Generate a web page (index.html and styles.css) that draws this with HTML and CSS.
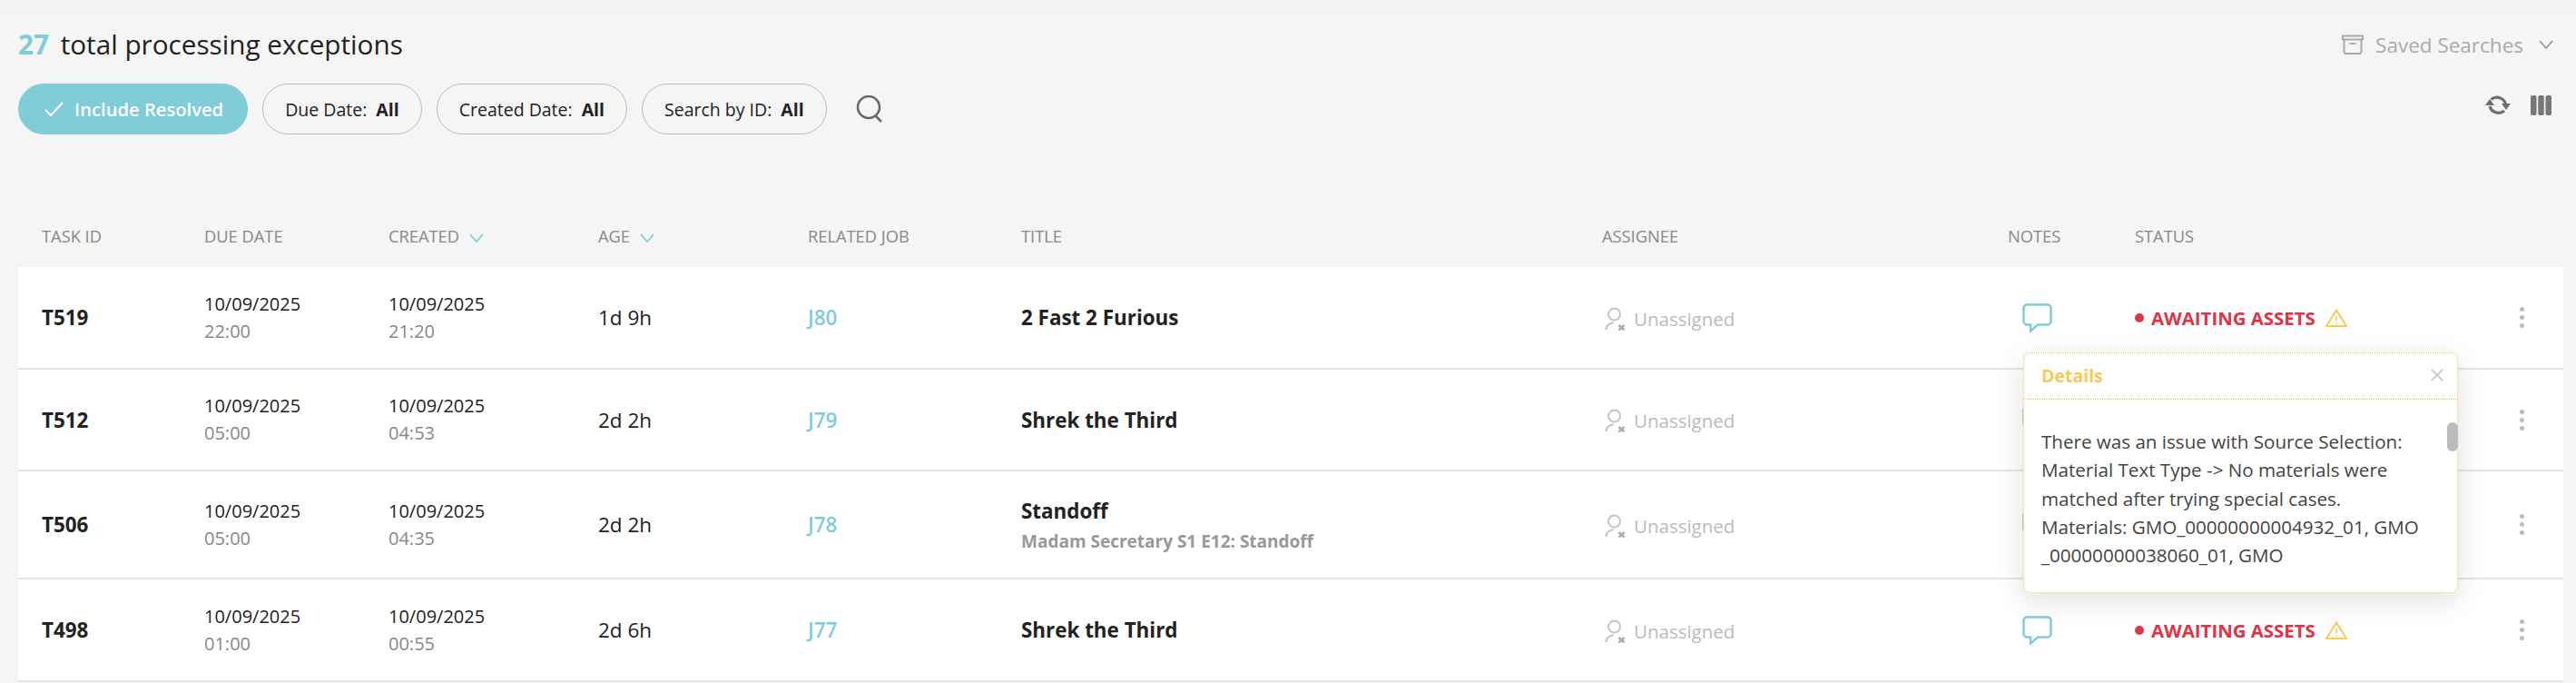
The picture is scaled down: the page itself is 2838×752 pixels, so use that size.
FILE: index.html
```html
<!DOCTYPE html>
<html lang="en">
<head>
  <meta charset="UTF-8" />
  <title>Processing exceptions</title>
  <link rel="stylesheet" href="styles.css">
</head>
<body>
  <!-- title row -->
  <div class="top">
    <h1><span class="count">27</span> total processing exceptions</h1>
    <div class="saved">
      <svg class="saved-icon" viewBox="0 0 24 22" width="24" height="22"><path d="M1 1.500h22v4H1zM2.500 5.500v13.500a2 2 0 0 0 2 2h15a2 2 0 0 0 2-2V5.500M8.500 10h7"/></svg>
      <span>Saved Searches</span>
      <svg class="saved-chev" viewBox="0 0 16 10" width="16" height="10"><path d="M1 1l7 8 7-8"/></svg>
    </div>
  </div>

  <!-- filters -->
  <div class="filters">
    <button class="chip chip-on">
      <svg viewBox="0 0 21 16" width="21" height="16"><path d="M1 9l6 6L20 1"/></svg>
      Include Resolved
    </button>
    <button class="chip">Due Date:<b>All</b></button>
    <button class="chip">Created Date:<b>All</b></button>
    <button class="chip">Search by ID:<b>All</b></button>
    <svg class="search" viewBox="0 0 30 30" width="30" height="30"><circle cx="14" cy="13" r="12"/><path d="M22 23l6 6"/></svg>
    <div class="tools">
      <svg class="refresh" viewBox="0 0 28 24" width="28" height="24">
        <path class="line" d="M6.500 5.500a10 10 0 0 1 16 5M21 18a10 10 0 0 1-16-5"/>
        <path class="fill" d="M18 10h10l-5 7zM0 12h10L5 5z"/>
      </svg>
      <svg class="columns" viewBox="0 0 23 22" width="23" height="22">
        <rect x="0" y="0" width="6.500" height="22" rx="2"/><rect x="8.250" y="0" width="6.500" height="22" rx="2"/><rect x="16.500" y="0" width="6.500" height="22" rx="2"/>
      </svg>
    </div>
  </div>

  <div class="table">
    <div class="row head">
      <div>Task ID</div>
      <div>Due Date</div>
      <div>Created <svg class="sort" viewBox="0 0 16 10" width="16" height="10"><path d="M1 1l7 8 7-8"/></svg></div>
      <div>Age <svg class="sort" viewBox="0 0 16 10" width="16" height="10"><path d="M1 1l7 8 7-8"/></svg></div>
      <div>Related Job</div>
      <div>Title</div>
      <div>Assignee</div>
      <div>Notes</div>
      <div>Status</div>
    </div>

    <div class="row item">
      <div class="id">T519</div>
      <div class="date">10/09/2025<small>22:00</small></div>
      <div class="date">10/09/2025<small>21:20</small></div>
      <div class="age">1d 9h</div>
      <a class="job">J80</a>
      <div class="title">2 Fast 2 Furious</div>
      <div class="assignee"><svg viewBox="0 0 23 26" width="23" height="26"><circle cx="10.500" cy="8" r="6.500"/><path d="M1.500 25c0-5 3-7 8-8"/><path class="x" d="M15.500 20l6 5.500M21.500 20l-6 5.500"/></svg>Unassigned</div>
      <div class="note"><svg viewBox="0 0 33 32" width="33" height="32"><path d="M5 1.500h23a3.500 3.500 0 0 1 3.500 3.500v15a3.500 3.500 0 0 1-3.500 3.500H17L9 30.500v-7H5A3.500 3.500 0 0 1 1.500 20V5A3.500 3.500 0 0 1 5 1.500z"/></svg></div>
      <div class="status"><i class="dot"></i>AWAITING ASSETS<svg viewBox="0 0 24 20" width="24" height="20"><path class="tri" d="M12 1.500L23 19H1z"/><path class="bang" d="M12 7.500v6M12 15.500v1.500"/></svg></div>
      <div class="menu"><i></i><i></i><i></i></div>
    </div>

    <div class="row item short">
      <div class="id">T512</div>
      <div class="date">10/09/2025<small>05:00</small></div>
      <div class="date">10/09/2025<small>04:53</small></div>
      <div class="age">2d 2h</div>
      <a class="job">J79</a>
      <div class="title">Shrek the Third</div>
      <div class="assignee"><svg viewBox="0 0 23 26" width="23" height="26"><circle cx="10.500" cy="8" r="6.500"/><path d="M1.500 25c0-5 3-7 8-8"/><path class="x" d="M15.500 20l6 5.500M21.500 20l-6 5.500"/></svg>Unassigned</div>
      <div class="note"><svg viewBox="0 0 33 32" width="33" height="32"><path d="M5 1.500h23a3.500 3.500 0 0 1 3.500 3.500v15a3.500 3.500 0 0 1-3.500 3.500H17L9 30.500v-7H5A3.500 3.500 0 0 1 1.500 20V5A3.500 3.500 0 0 1 5 1.500z"/></svg></div>
      <div class="status"></div>
      <div class="menu"><i></i><i></i><i></i></div>
    </div>

    <div class="row item tall">
      <div class="id">T506</div>
      <div class="date">10/09/2025<small>05:00</small></div>
      <div class="date">10/09/2025<small>04:35</small></div>
      <div class="age">2d 2h</div>
      <a class="job">J78</a>
      <div class="title">Standoff<small>Madam Secretary S1 E12: Standoff</small></div>
      <div class="assignee"><svg viewBox="0 0 23 26" width="23" height="26"><circle cx="10.500" cy="8" r="6.500"/><path d="M1.500 25c0-5 3-7 8-8"/><path class="x" d="M15.500 20l6 5.500M21.500 20l-6 5.500"/></svg>Unassigned</div>
      <div class="note"><svg viewBox="0 0 33 32" width="33" height="32"><path d="M5 1.500h23a3.500 3.500 0 0 1 3.500 3.500v15a3.500 3.500 0 0 1-3.500 3.500H17L9 30.500v-7H5A3.500 3.500 0 0 1 1.500 20V5A3.500 3.500 0 0 1 5 1.500z"/></svg></div>
      <div class="status"></div>
      <div class="menu"><i></i><i></i><i></i></div>
    </div>

    <div class="row item">
      <div class="id">T498</div>
      <div class="date">10/09/2025<small>01:00</small></div>
      <div class="date">10/09/2025<small>00:55</small></div>
      <div class="age">2d 6h</div>
      <a class="job">J77</a>
      <div class="title">Shrek the Third</div>
      <div class="assignee"><svg viewBox="0 0 23 26" width="23" height="26"><circle cx="10.500" cy="8" r="6.500"/><path d="M1.500 25c0-5 3-7 8-8"/><path class="x" d="M15.500 20l6 5.500M21.500 20l-6 5.500"/></svg>Unassigned</div>
      <div class="note"><svg viewBox="0 0 33 32" width="33" height="32"><path d="M5 1.500h23a3.500 3.500 0 0 1 3.500 3.500v15a3.500 3.500 0 0 1-3.500 3.500H17L9 30.500v-7H5A3.500 3.500 0 0 1 1.500 20V5A3.500 3.500 0 0 1 5 1.500z"/></svg></div>
      <div class="status"><i class="dot"></i>AWAITING ASSETS<svg viewBox="0 0 24 20" width="24" height="20"><path class="tri" d="M12 1.500L23 19H1z"/><path class="bang" d="M12 7.500v6M12 15.500v1.500"/></svg></div>
      <div class="menu"><i></i><i></i><i></i></div>
    </div>

    <!-- details popover, opened from the first row's note -->
    <div class="popover">
      <div class="pop-head">
        <span>Details</span>
        <svg viewBox="0 0 14 14" width="14" height="14"><path d="M1 1l12 12M13 1L1 13"/></svg>
      </div>
      <div class="pop-body">
        There was an issue with Source Selection:<br>
        Material Text Type -&gt; No materials were<br>
        matched after trying special cases.<br>
        Materials: GMO_00000000004932_01, GMO<br>
        _00000000038060_01, GMO
      </div>
      <div class="pop-scroll"></div>
    </div>
  </div>
</body>
</html>
```

FILE: styles.css
```css
* {
  box-sizing: border-box;
}

html,
body {
  height: 752px;
  overflow: hidden;
}

body {
  margin: 0;
  padding: 0 14px 0 20px;
  font-family: "Open Sans", "Liberation Sans", sans-serif;
  background: linear-gradient(#f1f1f1, #f5f5f5 16px);
  color: #222;
}

svg {
  fill: none;
  flex: none;
}

/* title row */
.top {
  display: flex;
  align-items: center;
  justify-content: space-between;
  height: 40px;
  margin-top: 29px;
}

h1 {
  margin: 0;
  font-size: 29.700px;
  font-weight: 400;
  line-height: 40px;
}

.count {
  color: #80ccd9;
  font-weight: 700;
  margin-right: 5px;
}

.saved {
  display: flex;
  align-items: center;
  color: #aaa;
  font-size: 22.500px;
  margin-right: 11px;
}

.saved-icon {
  margin-right: 13px;
  stroke: #aaa;
  stroke-width: 2;
}

.saved-chev {
  margin-left: 17px;
  stroke: #999;
  stroke-width: 1.800;
}

/* filters */
.filters {
  display: flex;
  align-items: center;
  gap: 16px;
  height: 56px;
  margin-top: 23px;
}

.chip {
  display: flex;
  align-items: center;
  height: 56px;
  padding: 0 24px;
  border: 1px solid #bbb;
  border-radius: 28px;
  background: none;
  font: inherit;
  font-size: 19.500px;
  color: #222;
  white-space: nowrap;
}

.chip b {
  margin-left: 10px;
  font-weight: 700;
}

.chip-on {
  padding: 0 26px 0 28px;
  border-color: #80ccd9;
  background: #80ccd9;
  color: #fff;
  font-size: 20.200px;
  font-weight: 600;
}

.chip-on svg {
  margin-right: 12px;
  stroke: #fff;
  stroke-width: 2.200;
}

.search {
  margin-left: 16px;
  stroke: #666;
  stroke-width: 2.500;
}

.tools {
  display: flex;
  align-items: center;
  gap: 22px;
  margin-left: auto;
  margin-right: 13px;
  margin-top: -8px;
}

.refresh .line {
  stroke: #6f6f6f;
  stroke-width: 3.200;
}

.refresh .fill {
  fill: #6f6f6f;
}

.columns rect {
  fill: #777;
}

/* table */
.table {
  position: relative;
  margin-top: 86px;
}

.row {
  display: grid;
  grid-template-columns: 179px 203px 231px 231px 235px 640px 447px 140px 424px 1fr;
  align-items: center;
  padding-left: 26px;
}

.head {
  height: 60px;
  padding-bottom: 10px;
  font-size: 18.300px;
  color: #888;
  text-transform: uppercase;
}

.sort {
  margin-left: 6px;
  stroke: #80ccd9;
  stroke-width: 1.800;
}

.item {
  height: 113px;
  background: #fff;
  border-bottom: 2px solid #e4e4e4;
  font-size: 20px;
}

.short {
  height: 112px;
}

.tall {
  height: 119px;
}

.id,
.title {
  font-weight: 700;
  font-size: 22.400px;
}

.date {
  font-size: 20px;
  line-height: 30px;
}

.date small {
  display: block;
  font-size: 20px;
  color: #888;
}

.age {
  font-size: 22.500px;
}

.job {
  color: #80ccd9;
  font-size: 22.500px;
  font-weight: 600;
}

.title small {
  display: block;
  margin-top: 5px;
  font-size: 19px;
  color: #999;
}

.assignee {
  display: flex;
  align-items: center;
  margin: 2px 0 0 3px;
  color: #bbb;
  font-size: 20.500px;
  gap: 9px;
}

.assignee svg {
  stroke: #c4c4c4;
  stroke-width: 2;
}

.assignee .x {
  stroke: #aaa;
  stroke-width: 2.400;
}

.note {
  padding-left: 16px;
  display: flex;
}

.note svg {
  stroke: #80ccd9;
  stroke-width: 2.500;
}

.status {
  display: flex;
  align-items: center;
  color: #e03347;
  font-weight: 700;
  font-size: 20.400px;
}

.dot {
  width: 10px;
  height: 10px;
  margin-right: 8px;
  border-radius: 50%;
  background: #e03347;
}

.status svg {
  margin-left: 11px;
}

.tri {
  stroke: #f7cb55;
  stroke-width: 2;
}

.bang {
  stroke: #f7cb55;
  stroke-width: 1.500;
}

.menu {
  display: flex;
  flex-direction: column;
  gap: 4px;
  width: 5px;
}

.menu i {
  width: 5px;
  height: 5px;
  border-radius: 50%;
  background: #bbb;
}

/* popover */
.popover {
  position: absolute;
  left: 2209px;
  top: 154px;
  width: 479px;
  height: 265px;
  background: #fff;
  border: 1px dotted #f4c63f;
  border-left: 1px solid #fae39f;
  border-right: 1px solid #fae39f;
  border-radius: 8px;
  box-shadow: 0 8px 32px rgba(0, 0, 0, 0.13);
}

.pop-head {
  display: flex;
  align-items: center;
  justify-content: space-between;
  height: 51px;
  padding: 0 15px 2px 19px;
  border-bottom: 1px dotted #f4c63f;
  color: #f7cb55;
  font-weight: 700;
  font-size: 19.500px;
}

.pop-head svg {
  stroke: #ccc;
  stroke-width: 1.800;
}

.pop-body {
  padding: 31px 19px 0;
  font-size: 20.600px;
  line-height: 31.300px;
  color: #444;
  white-space: nowrap;
}

.pop-scroll {
  position: absolute;
  right: -1px;
  top: 76px;
  width: 12px;
  height: 32px;
  border-radius: 6px;
  background: #bbb;
}
```
